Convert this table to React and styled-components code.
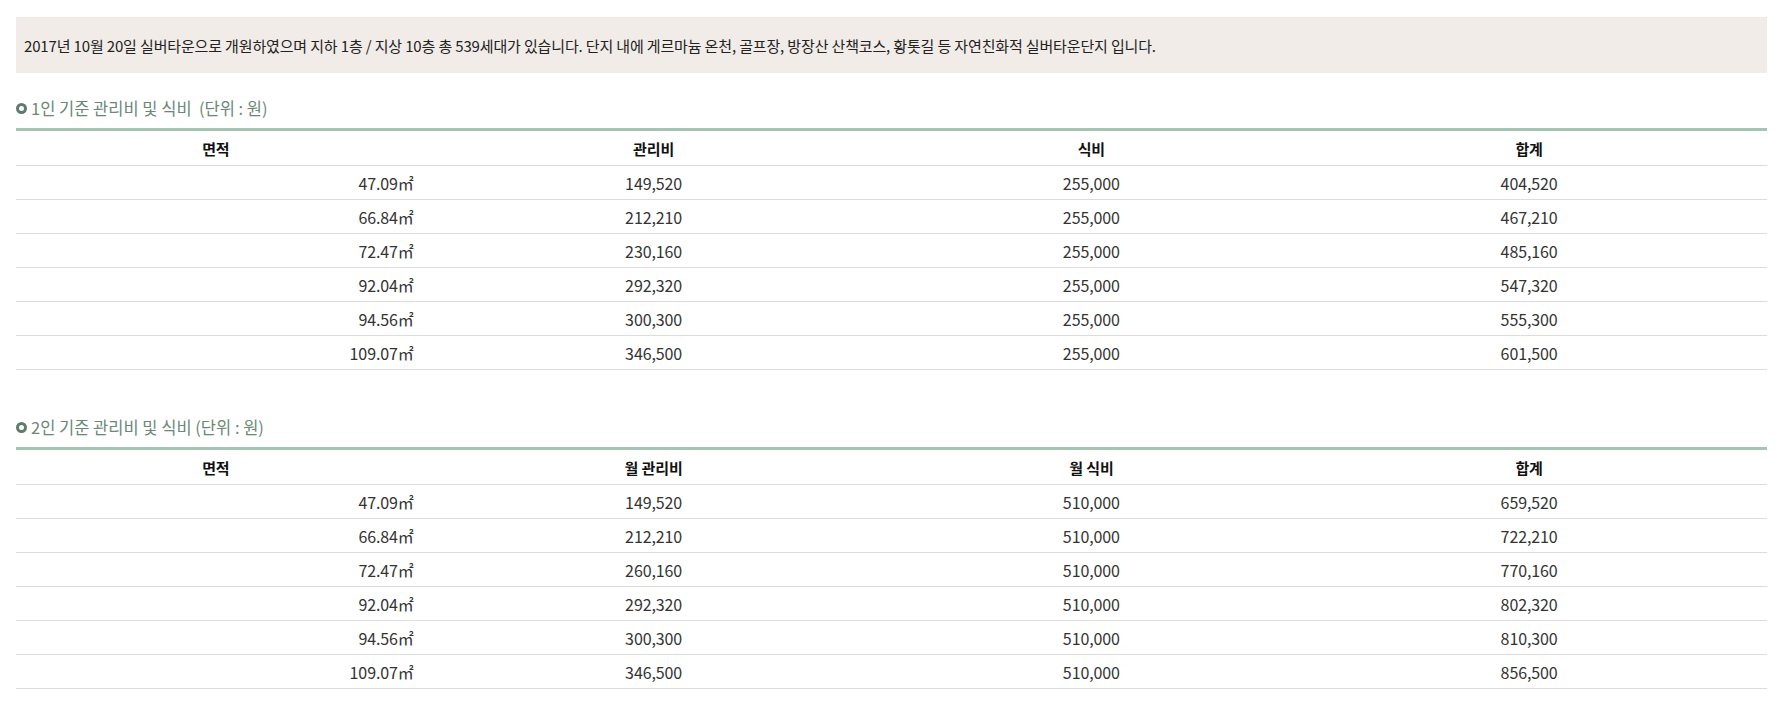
import React from 'react';
import styled, { createGlobalStyle } from 'styled-components';

const GlobalStyle = createGlobalStyle`
	body {
		margin: 0;
		background: #fff;
		font-family: 'Noto Sans CJK KR', 'Noto Sans', sans-serif;
	}
`;

const single = [
	['47.09㎡', '149,520', '255,000', '404,520'],
	['66.84㎡', '212,210', '255,000', '467,210'],
	['72.47㎡', '230,160', '255,000', '485,160'],
	['92.04㎡', '292,320', '255,000', '547,320'],
	['94.56㎡', '300,300', '255,000', '555,300'],
	['109.07㎡', '346,500', '255,000', '601,500'],
];

const couple = [
	['47.09㎡', '149,520', '510,000', '659,520'],
	['66.84㎡', '212,210', '510,000', '722,210'],
	['72.47㎡', '260,160', '510,000', '770,160'],
	['92.04㎡', '292,320', '510,000', '802,320'],
	['94.56㎡', '300,300', '510,000', '810,300'],
	['109.07㎡', '346,500', '510,000', '856,500'],
];

const FeeTable = ({ title, heads, rows, first }) => (
	<Section first={first}>
		<Title>
			<Dot />
			{title}
		</Title>
		<Table>
			<thead>
				<tr>
					{heads.map((h) => (
						<Th key={h}>{h}</Th>
					))}
				</tr>
			</thead>
			<tbody>
				{rows.map((r) => (
					<tr key={r[0]}>
						{r.map((v, i) => (
							<Td key={i} right={i === 0}>
								{v}
							</Td>
						))}
					</tr>
				))}
			</tbody>
		</Table>
	</Section>
);

const App = () => {
	return (
		<Page>
			<GlobalStyle />
			<Intro>
				2017년 10월 20일 실버타운으로 개원하였으며 지하 1층 / 지상 10층 총 539세대가 있습니다. 단지 내에 게르마늄 온천, 골프장, 방장산 산책코스, 황톳길 등 자연친화적 실버타운단지 입니다.
			</Intro>
			<FeeTable
				first
				title={'1인 기준 관리비 및 식비 \u00a0(단위 : 원)'}
				heads={['면적', '관리비', '식비', '합계']}
				rows={single}
			/>
			<FeeTable
				title="2인 기준 관리비 및 식비 (단위 : 원)"
				heads={['면적', '월 관리비', '월 식비', '합계']}
				rows={couple}
			/>
		</Page>
	);
};

export default App;

const Page = styled.div`
	padding: 17px 18px 20px 16px;
`;
const Intro = styled.div`
	display: flex;
	align-items: center;
	height: 56px;
	padding: 0 8px;
	background: #f1ece8;
	color: #222;
	font-size: 15px;
	letter-spacing: -0.15px;
`;
const Section = styled.div`
	margin-top: ${(p) => (p.first ? '23px' : '45px')};
`;
const Title = styled.h3`
	display: flex;
	align-items: center;
	gap: 4px;
	height: 24px;
	margin: 0 0 8px;
	font-size: 16.5px;
	font-weight: 400;
	color: #6a8778;
	letter-spacing: 0;
`;
const Dot = styled.span`
	display: inline-block;
	width: 5px;
	height: 5px;
	border: 3px solid #5e7c6e;
	border-radius: 50%;
	background: #fff;
`;
const Table = styled.table`
	width: 100%;
	border-collapse: collapse;
	table-layout: fixed;
	border-top: 3px solid #a6c4b4;
	font-size: 16px;
	letter-spacing: -0.1px;
`;
const Th = styled.th`
	height: 34px;
	padding: 0 38px 0 0;
	font-size: 15px;
	font-weight: 700;
	color: #111;
	text-align: center;
	border-bottom: 1px solid #dcdcdc;
`;
const Td = styled.td`
	height: 33px;
	padding: 0 ${(p) => (p.right ? '40px' : '38px')} 0 0;
	color: #333;
	text-align: ${(p) => (p.right ? 'right' : 'center')};
	border-bottom: 1px solid #dcdcdc;
`;
